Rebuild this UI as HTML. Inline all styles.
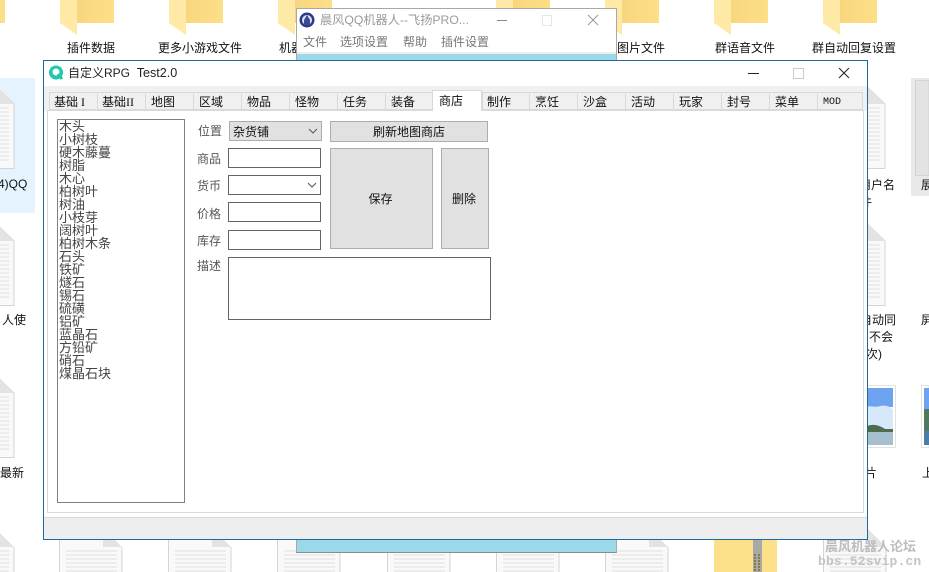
<!DOCTYPE html>
<html><head><meta charset="utf-8"><style>
*{box-sizing:border-box;margin:0;padding:0}
html,body{width:929px;height:572px;overflow:hidden;background:#fff}
body{position:relative;font-family:"Liberation Sans","Noto Sans CJK SC",sans-serif}
.a,.t,.l,.f,.tab,.in,.btn{position:absolute}
.t{font-size:12px;line-height:16px;color:#111;white-space:nowrap}
.l{font-family:"WenQuanYi Zen Hei","Noto Sans CJK SC",sans-serif;font-size:12px;line-height:14px;color:#555;white-space:nowrap}
.tab{top:92px;height:18px;background:#f0f0f0;border:1px solid #d9d9d9;border-right:0;font-family:"Liberation Serif","WenQuanYi Zen Hei","Noto Sans CJK SC",serif;font-size:12px;line-height:19px;padding-left:5px;color:#111;white-space:nowrap}
.in{background:#fff;border:1px solid #646464}
.btn{background:#e1e1e1;border:1px solid #adadad;font-family:"WenQuanYi Zen Hei","Noto Sans CJK SC",sans-serif;font-size:12px;color:#111;display:flex;align-items:center;justify-content:center}
#list{position:absolute;left:57px;top:119px;width:128px;height:384px;border:1px solid #808080;background:#fff;padding:0 0 0 1px;font-family:"WenQuanYi Zen Hei","Noto Sans CJK SC",sans-serif;font-size:13px;line-height:13px;color:#444}
#list div{height:13px;white-space:nowrap;position:relative;top:-1px}
</style></head><body>

<svg class="a" style="left:0;top:0" width="929" height="572" viewBox="0 0 929 572">
<defs>
<linearGradient id="g" x1="0" y1="0" x2="1" y2="0"><stop offset="0" stop-color="#f8d67e"/><stop offset="1" stop-color="#fddf88"/></linearGradient>
<g id="fo"><polygon points="0,0 17,0 17,35 0,23" fill="#ffe9a6"/><rect x="17" y="0" width="37" height="23" fill="url(#g)"/></g>
<g id="doc"><path d="M0.5 0.5H44L63 19V83.500H0.5Z" fill="#f9f9fa" stroke="#d4d4d4"/><path d="M44 0V19H63Z" fill="#e3e3e3"/><g stroke="#dedede"><path d="M7 23H58M7 27H58M7 31H58M7 35H58M7 39H58M7 43H58M7 47H58M7 51H58M7 55H58M7 59H58M7 63H58M7 67H58M7 71H58M7 75H58"/></g></g>
<g id="docb"><path d="M0.5 0.5H44L63 19V44H0.5Z" fill="#f9f9fa"/><path d="M0.5 0V44M63 19V44" stroke="#d4d4d4" fill="none"/><path d="M44 0V19H63Z" fill="#e3e3e3"/><g stroke="#dedede"><path d="M7 23H58M7 27H58M7 31H58M7 35H58M7 39H58M7 43H58"/></g></g>
</defs>
<use href="#fo" x="-49" y="0"/>
<use href="#fo" x="60" y="0"/><use href="#fo" x="169" y="0"/><use href="#fo" x="278" y="0"/>
<use href="#fo" x="496" y="0"/><use href="#fo" x="605" y="0"/><use href="#fo" x="714" y="0"/><use href="#fo" x="823" y="0"/>
<rect x="0" y="78" width="35" height="135" fill="#e5f3ff"/>
<use href="#doc" x="-49" y="85"/><use href="#doc" x="-49" y="222"/><use href="#doc" x="-49" y="374"/><use href="#docb" x="-49" y="528"/>
<use href="#doc" x="822" y="85"/><use href="#doc" x="822" y="222"/>
<rect x="911" y="78" width="18" height="118" fill="#e9e9e9"/><rect x="915.5" y="80.5" width="13.500" height="95" fill="#e3e3e3" stroke="#d2d2d2"/>
<rect x="860" y="385.500" width="35.500" height="62" fill="#fff" stroke="#e2e2e2"/>
<rect x="863" y="388" width="30" height="19" fill="#6ea4ef"/><path d="M863 407C870 405 875 408 880 406C885 405 890 406 893 410V429H863Z" fill="#d6e8f9"/>
<path d="M863 429C868 424 876 423 885 429L893 429V432H863Z" fill="#4d6b4d"/><rect x="863" y="432" width="30" height="13" fill="#a6c0cf"/>
<rect x="921.500" y="385.500" width="7.500" height="62" fill="#fff" stroke="#e2e2e2"/>
<rect x="924" y="388" width="5" height="21" fill="#6ea4ef"/><rect x="924" y="409" width="5" height="22" fill="#54785f"/><rect x="924" y="431" width="5" height="14" fill="#4e7ca8"/>
<use href="#docb" x="59" y="528"/><use href="#docb" x="168" y="528"/><use href="#docb" x="277" y="528"/><use href="#docb" x="387" y="528"/><use href="#docb" x="496" y="528"/><use href="#docb" x="605" y="528"/>
<rect x="714" y="535" width="63" height="37" fill="#fde08a"/><rect x="753" y="535" width="9" height="37" fill="#a8a8a8"/><path d="M755 554V572M759 554V572" stroke="#8a7a3a" stroke-width="2" stroke-dasharray="2 1" fill="none"/>
<use href="#docb" x="823" y="528"/>
</svg>

<div class="t" style="left:67px;top:40px">插件数据</div>
<div class="t" style="left:158px;top:40px">更多小游戏文件</div>
<div class="t" style="left:279px;top:40px">机器</div>
<div class="t" style="left:617px;top:40px">图片文件</div>
<div class="t" style="left:715px;top:40px">群语音文件</div>
<div class="t" style="left:812px;top:40px">群自动回复设置</div>
<div class="t" style="left:-2px;top:176px">4)QQ</div>
<div class="t" style="left:2px;top:312px">人使</div>
<div class="t" style="left:0;top:465px">最新</div>
<div class="t" style="left:859px;top:177px">用户名</div>
<div class="t" style="left:860px;top:194px">件</div>
<div class="t" style="left:860px;top:312px">自动同</div>
<div class="t" style="left:869px;top:329px">不会</div>
<div class="t" style="left:866px;top:346px">次)</div>
<div class="t" style="left:865px;top:465px">片</div>
<div class="t" style="left:921px;top:177px;width:8px;overflow:hidden">展</div>
<div class="t" style="left:921px;top:312px;width:8px;overflow:hidden">屏</div>
<div class="t" style="left:922px;top:465px;width:7px;overflow:hidden">上</div>

<div class="a" style="left:296px;top:8px;width:321px;height:545px;background:#fff;border:1px solid #a8a8a8;border-bottom-color:#8c8c8c">
 <div class="a" style="left:0;top:44px;width:319px;height:499px;background:#9ad8ea"></div>
 <div class="a" style="left:0;top:43px;width:319px;height:2px;background:#eee"></div>
</div>
<svg class="a" style="left:299px;top:12px" width="16" height="16" viewBox="0 0 16 16"><circle cx="8" cy="8" r="7.500" fill="#2c3a86"/><circle cx="8" cy="8" r="5" fill="#dfe3f0"/><path d="M8 3L11 8V13H5V8Z" fill="#3a4a94"/></svg>
<div class="t" style="left:320px;top:12px;color:#9a9a9a;font-size:12.200px">晨风QQ机器人--飞扬PRO...</div>
<svg class="a" style="left:495px;top:12px" width="110" height="18" viewBox="0 0 110 18"><path d="M2 8.500H12" stroke="#888"/><rect x="47.500" y="3.500" width="9" height="10" fill="none" stroke="#e6e6e6"/><path d="M93 3L103 13M103 3L93 13" stroke="#999" fill="none"/></svg>
<div class="t" style="left:303px;top:34px;color:#777">文件</div>
<div class="t" style="left:340px;top:34px;color:#777">选项设置</div>
<div class="t" style="left:403px;top:34px;color:#777">帮助</div>
<div class="t" style="left:441px;top:34px;color:#777">插件设置</div>

<div class="a" style="left:43px;top:60px;width:825px;height:480px;background:#fff;border:1px solid #1a6c9e"></div>
<div class="a" style="left:44px;top:86px;width:823px;height:25px;background:#f0f0f0"></div>
<svg class="a" style="left:48px;top:64px" width="17" height="17" viewBox="0 0 17 17"><circle cx="8" cy="8.500" r="7" fill="#1fc7ab"/><circle cx="8" cy="8" r="3.500" fill="#fff"/><path d="M10 10L14 15" stroke="#1fc7ab" stroke-width="3"/></svg>
<div class="t" style="left:68px;top:65px;color:#222">自定义RPG&nbsp;&nbsp;<span style="font-size:12.600px">Test2.0</span></div>
<svg class="a" style="left:745px;top:64px" width="110" height="18" viewBox="0 0 110 18"><path d="M3 9.500H14" stroke="#222"/><rect x="48.500" y="4.500" width="10" height="10" fill="none" stroke="#ccc"/><path d="M94 4L104 14M104 4L94 14" stroke="#222" fill="none"/></svg>

<div class="tab" style="left:49px;width:48px;padding-left:4px">基础 I</div>
<div class="tab" style="left:97px;width:48px;padding-left:4px">基础II</div>
<div class="tab" style="left:145px;width:48px">地图</div>
<div class="tab" style="left:193px;width:48px">区域</div>
<div class="tab" style="left:241px;width:48px">物品</div>
<div class="tab" style="left:289px;width:48px">怪物</div>
<div class="tab" style="left:337px;width:48px">任务</div>
<div class="tab" style="left:385px;width:47px">装备</div>
<div class="tab" style="left:482px;width:47px;padding-left:4px">制作</div>
<div class="tab" style="left:529px;width:48px">烹饪</div>
<div class="tab" style="left:577px;width:48px">沙盒</div>
<div class="tab" style="left:625px;width:48px">活动</div>
<div class="tab" style="left:673px;width:48px">玩家</div>
<div class="tab" style="left:721px;width:48px">封号</div>
<div class="tab" style="left:769px;width:48px">菜单</div>
<div class="tab" style="left:817px;width:46px;border-right:1px solid #d9d9d9;font-size:10px;font-family:'Liberation Mono',monospace">MOD</div>

<div class="a" style="left:47px;top:110px;width:817px;height:403px;background:#fff;border:1px solid #d9d9d9"></div>
<div class="tab" style="left:432px;top:90px;width:50px;height:21px;background:#fff;border:1px solid #d9d9d9;border-bottom:0;line-height:21px;padding-left:6px">商店</div>
<div class="a" style="left:44px;top:517px;width:823px;height:22px;background:#eee;border-top:1px solid #d9d9d9"></div>

<div id="list"><div>木头</div><div>小树枝</div><div>硬木藤蔓</div><div>树脂</div><div>木心</div><div>柏树叶</div><div>树油</div><div>小枝芽</div><div>阔树叶</div><div>柏树木条</div><div>石头</div><div>铁矿</div><div>燧石</div><div>锡石</div><div>硫磺</div><div>铝矿</div><div>蓝晶石</div><div>方铅矿</div><div>硝石</div><div>煤晶石块</div></div>

<div class="l" style="left:198px;top:124px">位置</div>
<div class="l" style="left:197px;top:152px">商品</div>
<div class="l" style="left:197px;top:179px">货币</div>
<div class="l" style="left:197px;top:207px">价格</div>
<div class="l" style="left:197px;top:234px">库存</div>
<div class="l" style="left:197px;top:259px">描述</div>

<div class="btn" style="left:229px;top:121px;width:93px;height:20px;justify-content:flex-start;padding-left:3px">杂货铺</div>
<svg class="a" style="left:308px;top:128px" width="10" height="7" viewBox="0 0 10 7"><path d="M1 1L5 5L9 1" fill="none" stroke="#555"/></svg>
<div class="btn" style="left:330px;top:121px;width:158px;height:21px">刷新地图商店</div>
<div class="btn" style="left:330px;top:148px;width:103px;height:101px;padding-right:2px">保存</div>
<div class="btn" style="left:441px;top:148px;width:48px;height:101px;padding-right:2px">删除</div>
<div class="in" style="left:228px;top:148px;width:93px;height:20px"></div>
<div class="in" style="left:228px;top:175px;width:93px;height:20px"></div>
<svg class="a" style="left:307px;top:182px" width="10" height="7" viewBox="0 0 10 7"><path d="M1 1L5 5L9 1" fill="none" stroke="#555"/></svg>
<div class="in" style="left:228px;top:202px;width:93px;height:20px"></div>
<div class="in" style="left:228px;top:230px;width:93px;height:20px"></div>
<div class="in" style="left:228px;top:257px;width:263px;height:63px"></div>

<div class="t" style="left:825px;top:539px;color:#bdbdbd;font-weight:bold;font-size:13px">晨风机器人论坛</div>
<div class="t" style="left:818px;top:554px;color:#c4c4c4;font-weight:bold;font-size:13px;letter-spacing:.15px;font-family:'Liberation Mono',monospace">bbs.52svip.cn</div>
</body></html>
